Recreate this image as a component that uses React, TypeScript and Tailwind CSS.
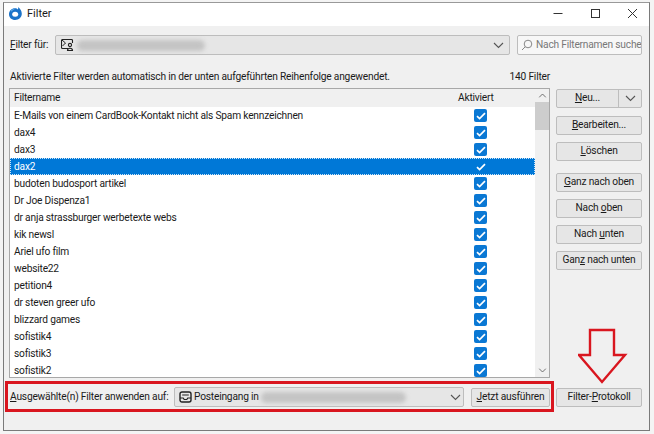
import React from "react";

const rows = [
  "E-Mails von einem CardBook-Kontakt nicht als Spam kennzeichnen",
  "dax4",
  "dax3",
  "dax2",
  "budoten budosport artikel",
  "Dr Joe Dispenza1",
  "dr anja strassburger werbetexte webs",
  "kik newsl",
  "Ariel ufo film",
  "website22",
  "petition4",
  "dr steven greer ufo",
  "blizzard games",
  "sofistik4",
  "sofistik3",
  "sofistik2",
];

function Chevron({ className = "" }: { className?: string }) {
  return (
    <svg width="11" height="7" viewBox="0 0 11 7" className={className}>
      <path d="M1 1l4.5 4.5L10 1" fill="none" stroke="#555" strokeWidth="1.1" />
    </svg>
  );
}

function Check({ selected }: { selected?: boolean }) {
  return (
    <span className={`flex h-[13px] w-[13px] items-center justify-center rounded-[2px] ${selected ? "bg-[#0078d7]" : "bg-[#0a78d4]"}`}>
      <svg width="10" height="8" viewBox="0 0 10 8">
        <path d="M1 4.2l2.6 2.4L9 1.2" fill="none" stroke="#fff" strokeWidth="1.7" />
      </svg>
    </span>
  );
}

function Btn({ children, className = "" }: { children: React.ReactNode; className?: string }) {
  return (
    <div className={`flex h-[19px] items-center justify-center rounded-[2px] border border-[#bdbdbd] bg-[#e6e6e6] text-[#1a1a1a] ${className}`}>
      <span>{children}</span>
    </div>
  );
}

function Blur({ className = "" }: { className?: string }) {
  return <div className={`rounded-full bg-[#c4c4c4] blur-[2px] ${className}`} />;
}

export default function App() {
  return (
    <div className="h-[434px] w-[654px] overflow-hidden bg-[#f4f4f4] pb-[3px] pl-[3px] pr-[4px] pt-[2px] font-['Roboto','Noto_Sans',sans-serif] text-[10.2px] leading-none tracking-[-0.2px] text-[#1a1a1a]">
      <div className="relative flex h-full flex-col border border-[#7a7a7a] border-t-[#999] bg-[#f0f0f0]">
        {/* title bar */}
        <div className="flex h-[23px] shrink-0 items-center bg-white pb-[3px] pl-[4px]">
          <svg width="15" height="15" viewBox="0 0 15 15">
            <path d="M7 2.2C3.6 2.2 1 4.8 1 8.2s2.7 5.8 6.2 5.8 6.6-2.6 6.6-6.2c0-2.7-1.5-5-3.6-6.8.2 1.2 0 2-.6 2.4C9.4 2.8 8.2 2.2 7 2.2z" fill="#1b73c9" />
            <ellipse cx="7.2" cy="8.3" rx="3" ry="2.5" fill="#fff" />
            <path d="M3 4.6C4.2 3.2 6 2.6 7.6 2.8 5.8 3.4 4.4 4.2 3.4 5.8z" fill="#63b0ee" />
          </svg>
          <span className="ml-[4px] text-[11px] tracking-normal">Filter</span>
          <div className="ml-auto flex items-center gap-[26px] pr-[11px]">
            <svg width="11" height="11" viewBox="0 0 11 11"><path d="M0.5 5.5h9" stroke="#333" strokeWidth="1" /></svg>
            <svg width="11" height="11" viewBox="0 0 11 11"><rect x="1.5" y="1.5" width="8" height="8" fill="none" stroke="#333" strokeWidth="1" /></svg>
            <svg width="11" height="11" viewBox="0 0 11 11"><path d="M1 1l9 9M10 1l-9 9" stroke="#333" strokeWidth="1" /></svg>
          </div>
        </div>

        <div className="flex min-h-0 flex-1 flex-col pl-[5px] pr-[7px] pt-[9px]">
          {/* Filter für row */}
          <div className="flex h-[20px] shrink-0 items-center">
            <span className="w-[46px] pl-[1px]"><span className="underline">F</span>ilter für:</span>
            <div className="flex h-[20px] w-[455px] items-center rounded-[2px] border border-[#bdbdbd] bg-[#e6e6e6] pl-[5px] pr-[4px]">
              <svg width="13" height="12" viewBox="0 0 13 12">
                <path d="M7 9.5H1.5a1 1 0 0 1-1-1v-7a1 1 0 0 1 1-1h9a1 1 0 0 1 1 1V4" fill="none" stroke="#222" strokeWidth="1.1" />
                <path d="M1 1l3.5 3L1.5 7" stroke="#222" fill="none" />
                <circle cx="9" cy="6" r="1.6" fill="none" stroke="#222" strokeWidth="1.1" />
                <path d="M6.5 11.5c0-3 5-3 5 0z" fill="none" stroke="#222" strokeWidth="1.1" />
              </svg>
              <Blur className="ml-[3px] h-[11px] w-[128px]" />
              <Chevron className="ml-auto mr-[1px]" />
            </div>
            <div className="ml-[7px] flex h-[20px] flex-1 items-center overflow-hidden whitespace-nowrap rounded-[2px] border border-[#bdbdbd] bg-[#f7f7f7] pl-[3px] text-[#777]">
              <svg width="12" height="12" viewBox="0 0 12 12" className="mr-[3px] shrink-0">
                <circle cx="7" cy="5" r="3.8" fill="none" stroke="#888" />
                <path d="M4.2 7.8L1 11" stroke="#888" />
              </svg>
              <span>Nach Filternamen suche</span>
            </div>
          </div>

          {/* info line */}
          <div className="mt-[16px] flex h-[12px] shrink-0 items-center justify-between pl-[1px] pr-[92px]">
            <span>Aktivierte Filter werden automatisch in der unten aufgeführten Reihenfolge angewendet.</span>
            <span>140 Filter</span>
          </div>

          {/* main */}
          <div className="mt-[5px] flex h-[290px] shrink-0">
            <div className="flex h-[290px] w-[541px] border border-[#a8a8a8] bg-white">
              <div className="flex min-w-0 flex-1 flex-col overflow-hidden">
                <div className="flex h-[18px] shrink-0 items-center bg-[#f0f0f0]">
                  <span className="w-[444px] pl-[4px]">Filtername</span>
                  <span className="pl-[4px]">Aktiviert</span>
                </div>
                <div className="min-h-0 flex-1 overflow-hidden">
                  {rows.map((r, i) => (
                    <div
                      key={r}
                      className={`flex h-[17px] items-center ${i === 3 ? "bg-[#0078d7] text-white outline-1 -outline-offset-1 outline-dotted outline-[#cfe6f8]" : ""}`}
                    >
                      <span className="w-[464px] shrink-0 pl-[4px] pt-[1px]">{r}</span>
                      <Check selected={i === 3} />
                    </div>
                  ))}
                </div>
              </div>
              {/* scrollbar */}
              <div className="flex w-[14px] shrink-0 flex-col bg-[#f0f0f0]">
                <div className="flex h-[13px] items-center justify-center">
                  <Chevron className="rotate-180 scale-75" />
                </div>
                <div className="h-[28px] bg-[#cdcdcd]" />
                <div className="mt-auto flex h-[13px] items-center justify-center">
                  <Chevron className="scale-75" />
                </div>
              </div>
            </div>

            {/* side buttons */}
            <div className="ml-[6px] flex flex-1 flex-col pt-[1px]">
              <div className="flex h-[19px] rounded-[2px] border border-[#bdbdbd] bg-[#e6e6e6]">
                <div className="flex flex-1 items-center justify-center border-r border-[#bdbdbd]">
                  <span><span className="underline">N</span>eu...</span>
                </div>
                <div className="flex w-[22px] items-center justify-center"><Chevron /></div>
              </div>
              <Btn className="mt-[8px]"><span className="underline">B</span>earbeiten...</Btn>
              <Btn className="mt-[7px]"><span className="underline">L</span>öschen</Btn>
              <Btn className="mt-[12px]"><span className="underline">G</span>anz nach oben</Btn>
              <Btn className="mt-[7px]">Nach <span className="underline">o</span>ben</Btn>
              <Btn className="mt-[7px]">Nach <span className="underline">u</span>nten</Btn>
              <Btn className="mt-[7px]">Gan<span className="underline">z</span> nach unten</Btn>
            </div>
          </div>

          {/* bottom row */}
          <div className="mt-[9px] flex h-[20px] shrink-0 items-center">
            <span className="w-[165px] whitespace-nowrap pl-[1px]"><span className="underline">A</span>usgewählte(n) Filter anwenden auf:</span>
            <div className="flex h-[20px] w-[290px] items-center rounded-[2px] border border-[#bdbdbd] bg-[#e6e6e6] pl-[4px] pr-[2px]">
              <svg width="13" height="12" viewBox="0 0 13 12">
                <rect x="1" y="1" width="11" height="10" rx="2" fill="none" stroke="#222" strokeWidth="1.4" />
                <path d="M1 7h3.2l1 1.5h2.6l1-1.5H12M3.2 4h6.6" fill="none" stroke="#222" strokeWidth="1.2" />
              </svg>
              <span className="ml-[2px]">Posteingang in</span>
              <Blur className="ml-[2px] h-[11px] w-[145px]" />
              <Chevron className="ml-auto" />
            </div>
            <Btn className="ml-[7px] w-[79px]"><span className="underline">J</span>etzt ausführen</Btn>
            <Btn className="ml-[6px] flex-1">Filter-<span className="underline">P</span>rotokoll</Btn>
          </div>
        </div>

        {/* annotations drawn over the dialog */}
        <div className="absolute left-[1px] top-[378px] h-[31px] w-[549px] border-[3px] border-[#d9161f]" />
        <svg width="50" height="56" viewBox="0 0 50 56" className="absolute left-[574px] top-[325px]">
          <path d="M12 2h24v25h11L24 54 1 27h11z" fill="none" stroke="#d9161f" strokeWidth="2.4" />
        </svg>
      </div>
    </div>
  );
}
